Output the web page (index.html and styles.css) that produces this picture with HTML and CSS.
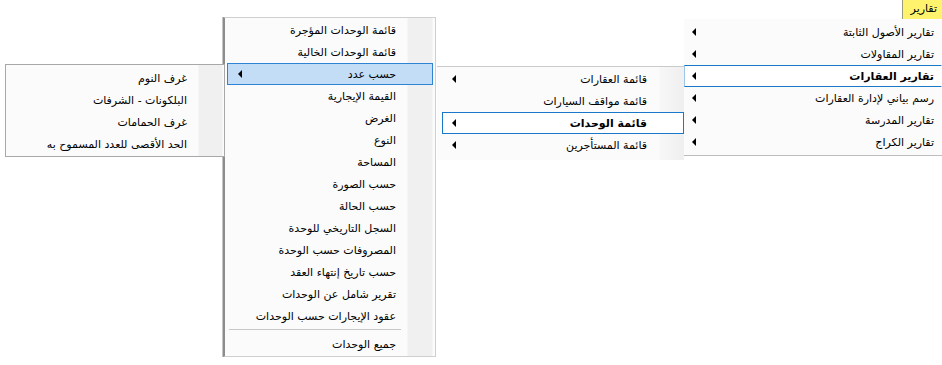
FILE: index.html
```html
<!DOCTYPE html>
<html lang="ar">
<head>
    <meta charset="UTF-8">
    <title>تقارير</title>
    <link rel="stylesheet" href="styles.css">
</head>
<body>

<div class="tab">تقارير</div>

<!-- القائمة الرئيسية -->
<div class="menu m1">
    <div class="item"><span>تقارير الأصول الثابتة</span><i class="arrow"></i></div>
    <div class="item"><span>تقارير المقاولات</span><i class="arrow"></i></div>
    <div class="item open"><span>تقارير العقارات</span><i class="arrow"></i></div>
    <div class="item"><span>رسم بياني لإدارة العقارات</span><i class="arrow"></i></div>
    <div class="item"><span>تقارير المدرسة</span><i class="arrow"></i></div>
    <div class="item"><span>تقارير الكراج</span><i class="arrow"></i></div>
</div>

<div class="menu m2">
    <div class="item"><span>قائمة العقارات</span><i class="arrow"></i></div>
    <div class="item"><span>قائمة مواقف السيارات</span></div>
    <div class="item open"><span>قائمة الوحدات</span><i class="arrow"></i></div>
    <div class="item"><span>قائمة المستأجرين</span><i class="arrow"></i></div>
</div>

<div class="menu m3">
    <div class="item"><span>قائمة الوحدات المؤجرة</span></div>
    <div class="item"><span>قائمة الوحدات الخالية</span></div>
    <div class="item hover"><span>حسب عدد</span><i class="arrow"></i></div>
    <div class="item"><span>القيمة الإيجارية</span></div>
    <div class="item"><span>الغرض</span></div>
    <div class="item"><span>النوع</span></div>
    <div class="item"><span>المساحة</span></div>
    <div class="item"><span>حسب الصورة</span></div>
    <div class="item"><span>حسب الحالة</span></div>
    <div class="item"><span>السجل التاريخي للوحدة</span></div>
    <div class="item"><span>المصروفات حسب الوحدة</span></div>
    <div class="item"><span>حسب تاريخ إنتهاء العقد</span></div>
    <div class="item"><span>تقرير شامل عن الوحدات</span></div>
    <div class="item"><span>عقود الإيجارات حسب الوحدات</span></div>
    <div class="sep"></div>
    <div class="item"><span>جميع الوحدات</span></div>
</div>

<div class="menu m4">
    <div class="item"><span>غرف النوم</span></div>
    <div class="item"><span>البلكونات - الشرفات</span></div>
    <div class="item"><span>غرف الحمامات</span></div>
    <div class="item"><span>الحد الأقصى للعدد المسموح به</span></div>
</div>

</body>
</html>
```

FILE: styles.css
```css
*{
    margin:0;
    padding:0;
    box-sizing:border-box;
}

body {
    width:942px;
    height:365px;
    overflow:hidden;
    position:relative;
    background:#fff;
    font-family:"DejaVu Sans", sans-serif;
    font-size:11px;
    color:#000;
}

.tab {
    position:absolute;
    left:902px;
    top:0;
    width:40px;
    height:19px;
    background:#fff36e;
    border-left:1px solid #9a9a7a;
    direction:rtl;
    padding-right:5px;
    line-height:18px;
}

/* popups on the canvas */
.menu {
    position:absolute;
    direction:rtl;
    background:#fbfbfb;
}
.item {
    height:22px;
    display:flex;
    align-items:center;
    justify-content:space-between;
    border:1px solid transparent;
    white-space:nowrap;
}
.arrow {
    width:0;
    height:0;
    border-top:4px solid transparent;
    border-bottom:4px solid transparent;
    border-right:4px solid #000;
}
.sep {
    height:6px;
    margin:0 32px 0 2px;
    border-bottom:3px solid #fbfbfb;
    border-top:2px solid #fbfbfb;
    background:#c8c8c8;
}

.m1 {
    left:684px;
    top:19px;
    width:258px;
    padding:2px 0;
    border-bottom:1px solid #bdbdbd;
}
.m1 .item {
    padding:0 7px 0 7px;
}
.m1 .open {
    background:#fff;
    border-color:#1a78c8 transparent #1a78c8 #9cc6ea;
    font-weight:bold;
}

.m2 {
    left:437px;
    top:66px;
    width:247px;
    height:94px;
    border-top:1px solid #cacaca;
    padding-top:1px;
    background:linear-gradient(to left, #efefef 0, #f7f7f7 24px, #fbfbfb 25px);
}
.m2 .item {
    padding:0 36px 0 9px;
    margin-left:5px;
}
.m2 .open {
    background:#fff;
    border-color:#1a78c8;
    font-weight:bold;
}

.m3 {
    left:223px;
    top:17px;
    width:213px;
    height:340px;
    padding:1px 2px;
    border:1px solid #cfcfcf;
    border-left:2px solid #8c8c8c;
    box-shadow:-1px 0 0 #c4c4c4;
    background:linear-gradient(to left, #fbfbfb 2px, #f0f0f0 3px, #f0f0f0 27px, #fbfbfb 28px);
}
.m3 .item {
    padding:0 36px 0 10px;
}
.m3 .hover {
    background:#c2ddf5;
    border-color:#2f83d3;
}

.m4 {
    left:5px;
    top:64px;
    width:220px;
    height:93px;
    padding:2px 0;
    border:1px solid #a8a8a8;
    background:linear-gradient(to left, #fbfbfb 1px, #f0f0f0 2px, #f0f0f0 25px, #fbfbfb 26px);
}
.m4 .item {
    padding:0 36px 0 8px;
}
```
